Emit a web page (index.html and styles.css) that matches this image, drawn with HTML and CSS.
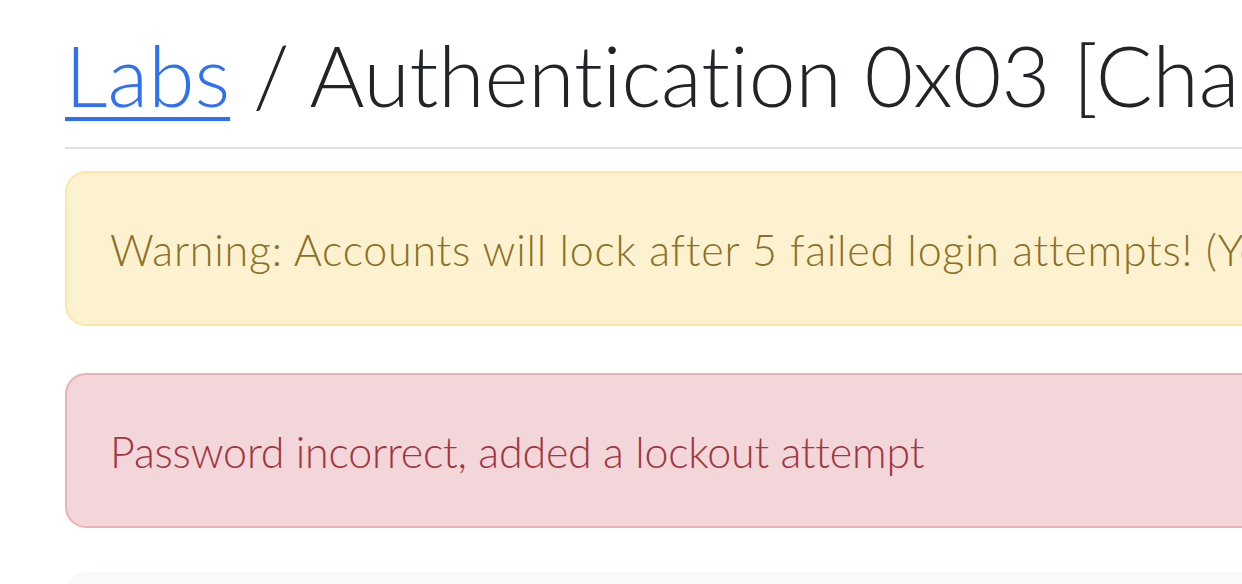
FILE: index.html
```html
<!DOCTYPE html>
<html lang="en">
<head>
<meta charset="utf-8">
<title>Authentication 0x03</title>
<link rel="stylesheet" href="styles.css">
</head>
<body>
<main class="container">
  <h1 class="page-title"><a class="crumb" href="#">Labs</a> / Authentication 0x03 [Challenge]</h1>
  <hr class="rule">
  <div class="alert alert-warning">Warning: Accounts will lock after 5 failed login attempts! (You have been warned)</div>
  <div class="alert alert-danger">Password incorrect, added a lockout attempt</div>
  <div class="card">
    <div class="card-body"></div>
  </div>
</main>
</body>
</html>
```
FILE: styles.css
```css
html, body {
  margin: 0;
  padding: 0;
  overflow: hidden;
  background: #ffffff;
}
body {
  font-family: "Lato", "Open Sans", sans-serif;
  font-weight: 300;
  color: #212529;
  font-variant-ligatures: none;
  font-feature-settings: "liga" 0, "clig" 0;
}
.container {
  width: 1500px;
  padding-left: 65px;
  display: flex;
  flex-direction: column;
}
.page-title {
  margin: 0;
  padding-top: 25px;
  font-size: 84px;
  font-weight: 300;
  line-height: 1.2;
  white-space: nowrap;
  color: #212529;
}
.crumb {
  color: #3070f2;
  text-decoration: underline;
  text-decoration-thickness: 4px;
  text-underline-offset: 10px;
}
.rule {
  margin: 21px 0 22px 0;
  border: 0;
  border-top: 2px solid #dfe1e4;
  height: 0;
}
.alert {
  box-sizing: border-box;
  height: 155px;
  padding: 42px 43px 40px 43px;
  border: 2px solid transparent;
  border-radius: 21px;
  font-size: 43px;
  letter-spacing: -0.2px;
  line-height: 69px;
  white-space: nowrap;
  margin-bottom: 47px;
}
.alert-warning {
  background: #fcf2cf;
  border-color: #fbe6a6;
  color: #8d7026;
  letter-spacing: 0.75px;
}
.alert-danger {
  background: #f2d6d9;
  border-color: #e9b0b7;
  color: #a3353f;
  margin-bottom: 44px;
}
.card {
  background: #f8f9fa;
  border-radius: 21px;
  height: 200px;
}
```
